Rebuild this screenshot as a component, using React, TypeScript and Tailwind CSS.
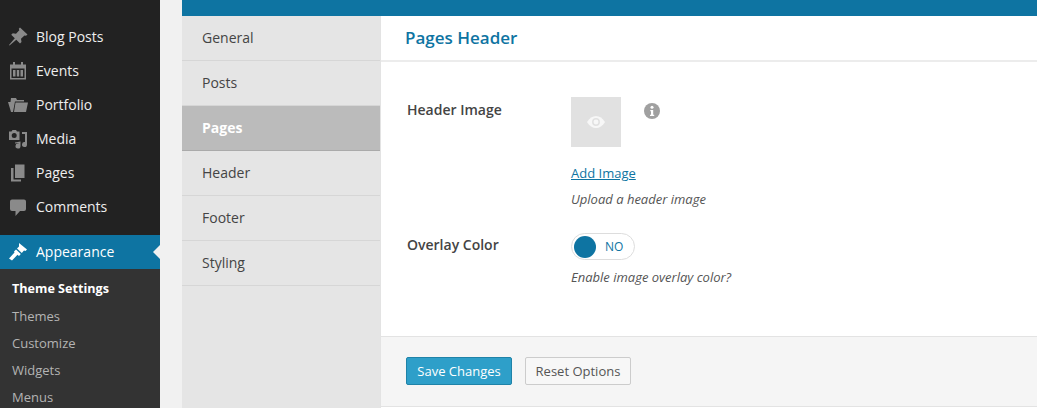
import React from 'react';

const iconClass = 'w-5 h-5 fill-[#8a8a8a]';

// Dashicon style menu glyphs
const PinIcon = () => (
  <svg viewBox="0 0 20 20" className={iconClass}>
    <path d="M12 0.500 19.500 7.500 18 8.800 16.500 8.400 13 11.800 13.500 15 12 16.500 8.300 12.800 1.500 18.500 1 18 6.800 11.200 3.200 7.800 4.800 6.300 8 6.800 11.300 3.300 10.800 1.800z" />
  </svg>
);
const CalendarIcon = () => (
  <svg viewBox="0 0 20 20" className={iconClass}>
    <path d="M5 1h2v2.500h6V1h2v2.500h3v15H2v-15h3zM3.500 7.500v9.500h13V7.500zM5 9h2.500v6.500H5zM8.800 9h2.400v6.500H8.800zM12.500 9H15v6.500h-2.500z" fillRule="evenodd" />
  </svg>
);
const FolderIcon = () => (
  <svg viewBox="0 0 20 20" className="w-5 h-5 fill-[#8a8a8a]">
    <path d="M3 3h5l1 2h7v1.500H7L5 17H3L0 7h2.500zM7.500 7.500H20L18 17H6z" />
  </svg>
);
const MediaIcon = () => (
  <svg viewBox="0 0 20 20" className={iconClass}>
    <path d="M1 2.500h2.500l1-1.500h3.500l1 1.500H11.500V11H1zM6.200 4a2.500 2.500 0 1 0 0 5 2.500 2.500 0 0 0 0-5z" fillRule="evenodd" />
    <path d="M14 3h5v12.500a2.500 2.500 0 1 1-2-2.400V5h-3z" />
    <path d="M7 13.500l5.500-1v4.500a2.500 2.500 0 1 1-2-2.400v-.6l-3.500.6z" />
  </svg>
);
const PagesIcon = () => (
  <svg viewBox="0 0 20 20" className={iconClass}>
    <path d="M7 1.500h9.500v13.500H7z" />
    <path d="M3 5h2.500v11.500H13v2H3z" />
  </svg>
);
const CommentIcon = () => (
  <svg viewBox="0 0 20 20" className={iconClass}>
    <path d="M4 2.500h12a2 2 0 0 1 2 2v7.500a2 2 0 0 1-2 2h-4l-4.500 5v-5H4a2 2 0 0 1-2-2V4.500a2 2 0 0 1 2-2z" />
  </svg>
);
const BrushIcon = () => (
  <svg viewBox="0 0 20 20" className="w-5 h-5 fill-white">
    <path d="M11 1 19 7.500 17.500 9 16 8.500 13.800 11 9 6.500 11 4.500z" />
    <path d="M8 7.500 12.800 12 11 14 9.500 12.800 4 18.500 1 16.500 6.500 10.500 6 9.500z" />
  </svg>
);

const menuItems = [
  { label: 'Blog Posts', icon: <PinIcon /> },
  { label: 'Events', icon: <CalendarIcon /> },
  { label: 'Portfolio', icon: <FolderIcon /> },
  { label: 'Media', icon: <MediaIcon /> },
  { label: 'Pages', icon: <PagesIcon /> },
  { label: 'Comments', icon: <CommentIcon /> },
];

const subItems = ['Themes', 'Customize', 'Widgets', 'Menus'];

const settingsTabs = ['General', 'Posts', 'Pages', 'Header', 'Footer', 'Styling'];

const Sidebar = () => (
  <div className="w-[160px] shrink-0 bg-[#222222] pt-[20px]">
    {menuItems.map(item => (
      <div key={item.label} className="h-[34px] flex items-center pl-[8px]">
        <span className="w-[28px] shrink-0">{item.icon}</span>
        <span className="pb-[2px] text-[14px] text-[#eeeeee]">{item.label}</span>
      </div>
    ))}
    <div className="relative mt-[11px] h-[34px] bg-[#0e74a2] flex items-center pl-[8px]">
      <span className="w-[28px] shrink-0"><BrushIcon /></span>
      <span className="pb-[2px] text-[14px] text-white">Appearance</span>
      <span className="absolute right-0 top-[10px] border-y-[7px] border-r-[7px] border-y-transparent border-r-[#f1f1f1]" />
    </div>
    <div className="bg-[#333333] pt-[7px] pb-[20px] pl-[12px] text-[13px] text-[#b4b4b4]">
      <div className="h-[27px] flex items-center text-[12.6px] font-bold text-white">Theme Settings</div>
      {subItems.map(s => (
        <div key={s} className="h-[27px] flex items-center">{s}</div>
      ))}
    </div>
  </div>
);

const Tabs = () => (
  <div className="w-[198px] shrink-0 bg-[#e5e5e5]">
    {settingsTabs.map(tab =>
      tab === 'Pages' ? (
        <div key={tab} className="h-[45px] flex items-center pl-[20px] pb-[2px] bg-[#bbbbbb] border-b border-[#aaaaaa] text-[14px] font-bold text-white">
          {tab}
        </div>
      ) : (
        <div key={tab} className="h-[45px] flex items-center pl-[20px] pb-[2px] border-b border-[#d6d6d6] text-[14px] text-[#444444]">
          {tab}
        </div>
      )
    )}
  </div>
);

const Content = () => (
  <div className="flex-1 flex flex-col bg-white border-l border-[#e3e3e3]">
    <div className="h-[46px] flex items-center pl-[24px] border-b-2 border-[#ececec] shrink-0">
      <h2 className="text-[17px] font-semibold text-[#0e74a2]">Pages Header</h2>
    </div>

    <div className="h-[274px] shrink-0 pt-[35px] pl-[26px] flex">
      <div className="w-[164px] shrink-0 -mt-[1px] text-[14px] font-semibold text-[#444444]">
        <div className="h-[26px] flex items-center">Header Image</div>
        <div className="mt-[109px] h-[26px] flex items-center">Overlay Color</div>
      </div>
      <div>
        <div className="flex items-start">
          <div className="w-[50px] h-[50px] bg-[#e1e1e1] flex items-center justify-center">
            <svg viewBox="0 0 20 20" className="w-5 h-5">
              <path d="M1 10c2.500-4 5.500-6 9-6s6.500 2 9 6c-2.500 4-5.500 6-9 6s-6.500-2-9-6z" fill="#f7f7f7" />
              <circle cx="10" cy="10" r="3.200" fill="none" stroke="#e1e1e1" strokeWidth="1.500" />
            </svg>
          </div>
          <svg viewBox="0 0 16 16" className="w-4 h-4 ml-[23px] mt-[6px]">
            <circle cx="8" cy="8" r="8" fill="#a0a0a0" />
            <circle cx="8" cy="4.300" r="1.500" fill="#ffffff" />
            <path d="M6.300 7h2.900v4.700h1v1.300H6v-1.300h1V8.300h-.7z" fill="#ffffff" />
          </svg>
        </div>
        <a className="block mt-[16px] text-[13px] leading-[20px] text-[#0e74a2] underline">Add Image</a>
        <p className="mt-[6px] text-[13px] leading-[20px] italic text-[#555555]">Upload a header image</p>
        <div className="mt-[24px] w-[64px] h-[27px] rounded-full border border-[#dddddd] flex items-center pl-[2px]">
          <span className="w-[22px] h-[22px] rounded-full bg-[#0e74a2]" />
          <span className="ml-[9px] text-[12px] text-[#0e74a2]">NO</span>
        </div>
        <p className="mt-[7px] text-[13px] leading-[20px] italic text-[#555555]">Enable image overlay color?</p>
      </div>
    </div>

    <div className="h-[71px] shrink-0 bg-[#f5f5f5] border-y border-[#e3e3e3] pl-[25px] pt-[20px] flex items-start gap-[13px]">
      <button className="w-[106px] h-[28px] pt-[2px] bg-[#2e9fc9] border border-[#1f83a8] rounded-[2px] text-[13px] text-white">Save Changes</button>
      <button className="w-[106px] h-[28px] pt-[2px] bg-[#f7f7f7] border border-[#cccccc] rounded-[2px] text-[13px] text-[#555555]">Reset Options</button>
    </div>
  </div>
);

const App: React.FC = () => {
  return (
    <div className="h-[408px] overflow-hidden flex bg-[#f1f1f1] font-['Open_Sans',sans-serif]">
      <Sidebar />
      <div className="flex-1 ml-[22px] flex flex-col">
        <div className="h-[16px] shrink-0 bg-[#0e74a2]" />
        <div className="flex-1 flex">
          <Tabs />
          <Content />
        </div>
      </div>
    </div>
  );
};

export default App;
